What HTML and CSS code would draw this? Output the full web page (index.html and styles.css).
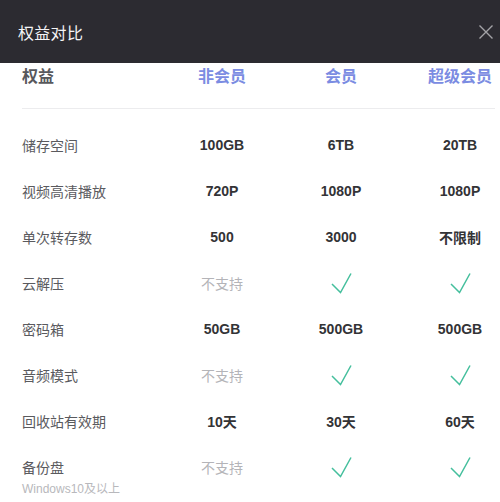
FILE: index.html
```html
<!DOCTYPE html>
<html lang="zh-CN">
<head>
<meta charset="utf-8">
<title>权益对比</title>
<link rel="stylesheet" href="styles.css">
</head>
<body>
<div class="dialog">
  <div class="topbar">
    <span class="title">权益对比</span>
    <svg class="close" width="16" height="16" viewBox="0 0 16 16"><path d="M1.5 1.5 L14.5 14.5 M14.5 1.5 L1.5 14.5" stroke="#a3a3a7" stroke-width="1.4" fill="none"/></svg>
  </div>
  <div class="content">
    <div class="row head">
      <div class="label">权益</div>
      <div class="cell blue">非会员</div>
      <div class="cell blue">会员</div>
      <div class="cell blue">超级会员</div>
    </div>
    <div class="divider"></div>
    <div class="row"><div class="label">储存空间</div><div class="cell">100GB</div><div class="cell">6TB</div><div class="cell">20TB</div></div>
    <div class="row"><div class="label">视频高清播放</div><div class="cell">720P</div><div class="cell">1080P</div><div class="cell">1080P</div></div>
    <div class="row"><div class="label">单次转存数</div><div class="cell">500</div><div class="cell">3000</div><div class="cell">不限制</div></div>
    <div class="row"><div class="label">云解压</div><div class="cell no">不支持</div><div class="cell"><svg class="check" width="22" height="22" viewBox="0 0 22 22"><path d="M2 12 L10.5 20.5 L21 1.5"/></svg></div><div class="cell"><svg class="check" width="22" height="22" viewBox="0 0 22 22"><path d="M2 12 L10.5 20.5 L21 1.5"/></svg></div></div>
    <div class="row"><div class="label">密码箱</div><div class="cell">50GB</div><div class="cell">500GB</div><div class="cell">500GB</div></div>
    <div class="row"><div class="label">音频模式</div><div class="cell no">不支持</div><div class="cell"><svg class="check" width="22" height="22" viewBox="0 0 22 22"><path d="M2 12 L10.5 20.5 L21 1.5"/></svg></div><div class="cell"><svg class="check" width="22" height="22" viewBox="0 0 22 22"><path d="M2 12 L10.5 20.5 L21 1.5"/></svg></div></div>
    <div class="row"><div class="label">回收站有效期</div><div class="cell">10天</div><div class="cell">30天</div><div class="cell">60天</div></div>
    <div class="row"><div class="label">备份盘<div class="sub">Windows10及以上</div></div><div class="cell no">不支持</div><div class="cell"><svg class="check" width="22" height="22" viewBox="0 0 22 22"><path d="M2 12 L10.5 20.5 L21 1.5"/></svg></div><div class="cell"><svg class="check" width="22" height="22" viewBox="0 0 22 22"><path d="M2 12 L10.5 20.5 L21 1.5"/></svg></div></div>
  </div>
</div>
</body>
</html>
```
FILE: styles.css
```css
html, body {
  margin: 0;
  padding: 0;
  background: #ffffff;
  overflow: hidden;
}
body {
  font-family: "Liberation Sans", "Noto Sans CJK SC", sans-serif;
}
.dialog {
  width: 500px;
  height: 502px;
  overflow: hidden;
}
.topbar {
  height: 63px;
  background: #2c2b31;
  display: flex;
  align-items: center;
  justify-content: space-between;
  padding: 0 6px 0 18px;
  box-sizing: border-box;
}
.title {
  color: #f4f4f6;
  font-family: "Noto Sans CJK SC", sans-serif;
  font-size: 16px;
  letter-spacing: 0.3px;
}
.close {
  display: block;
}
.content {
  padding-left: 22px;
  padding-right: 5px;
}
.row {
  display: grid;
  grid-template-columns: 160px 80px 158px 80px;
  align-items: start;
  height: 46px;
}
.row.head {
  height: 24px;
  margin-bottom: 21px;
}
.label {
  font-family: "Noto Sans CJK SC", sans-serif;
  font-size: 14px;
  color: #5a5a5e;
  line-height: 46px;
  white-space: nowrap;
}
.head .label {
  font-size: 16px;
  font-weight: 700;
  line-height: 24px;
  color: #58585c;
}
.sub {
  font-family: "Liberation Sans", "Noto Sans CJK SC", sans-serif;
  font-size: 12px;
  line-height: 14px;
  color: #b8b8bc;
  margin-top: -8px;
}
.cell {
  height: 46px;
  display: flex;
  align-items: center;
  justify-content: center;
  white-space: nowrap;
  font-size: 14px;
  font-weight: 700;
  color: #333336;
}
.head .cell {
  height: 24px;
  font-family: "Noto Sans CJK SC", sans-serif;
  font-size: 16px;
  color: #7b8ce2;
}
.cell.no {
  font-family: "Noto Sans CJK SC", sans-serif;
  font-weight: 400;
  color: #b4b4b8;
}
.divider {
  height: 1px;
  background: #ececee;
  margin-bottom: 13px;
}
.check path {
  fill: none;
  stroke: #45bf9d;
  stroke-width: 1.5;
}
```
